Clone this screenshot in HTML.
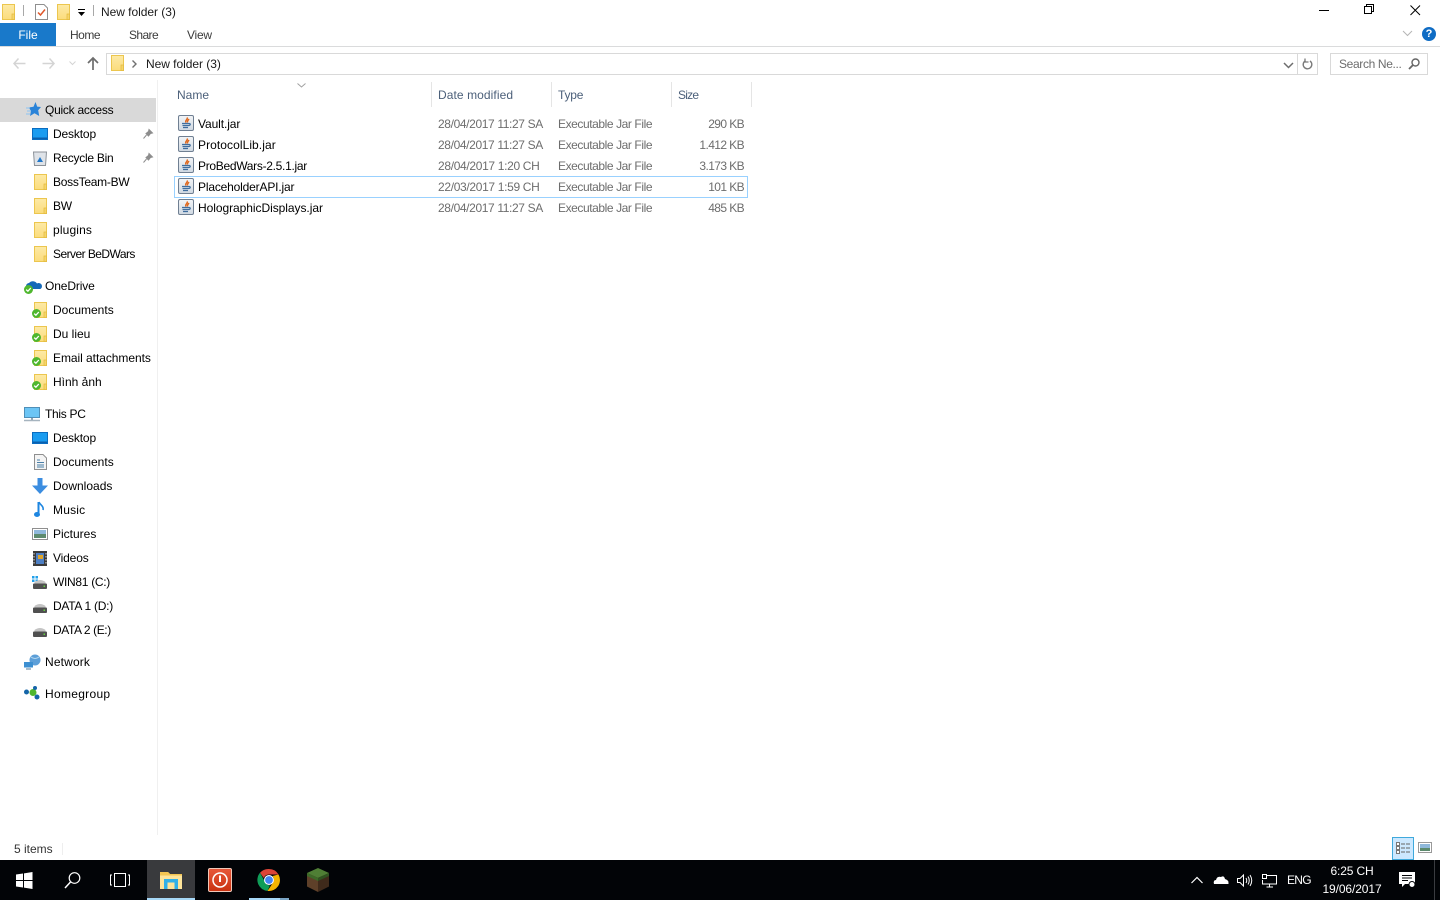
<!DOCTYPE html>
<html><head><meta charset="utf-8"><title>New folder (3)</title>
<style>
html,body{margin:0;padding:0;width:1440px;height:900px;overflow:hidden;background:#fff}
body{position:relative;font-family:"Liberation Sans","DejaVu Sans",sans-serif;font-size:12px;color:#000}
.t{position:absolute;white-space:nowrap;line-height:16px;height:16px}
.b{position:absolute}
svg{position:absolute;overflow:visible}
.g{color:#6d6d6d}.h{color:#4c607a}
.r{text-align:right}
.d{letter-spacing:-.37px}.d2{letter-spacing:-.33px}.e{letter-spacing:-.42px}.s{letter-spacing:-.6px}
</style></head><body>
<svg width="0" height="0" style="position:absolute">
<defs>
<linearGradient id="fg" x1="0" y1="0" x2="0" y2="1"><stop offset="0" stop-color="#fdeaa6"/><stop offset="1" stop-color="#fbdc7c"/></linearGradient>
<linearGradient id="jg" x1="0" y1="0" x2="0" y2="1"><stop offset="0" stop-color="#f3f5f7"/><stop offset="1" stop-color="#cfd8e2"/></linearGradient>
<linearGradient id="rg" x1="0" y1="0" x2="0" y2="1"><stop offset="0" stop-color="#e8583a"/><stop offset="1" stop-color="#c93210"/></linearGradient>
<symbol id="f" viewBox="0 0 13 16"><path d="M.5 .5H12.500V15.500H.5Z" fill="url(#fg)" stroke="#ecc64e"/><rect x="10" y="10" width="2.500" height="5.500" fill="#f6d56a" stroke="#e3b93f" stroke-width=".7"/></symbol>
<symbol id="ok" viewBox="0 0 9 9"><circle cx="4.500" cy="4.500" r="4.500" fill="#4fb72e"/><path d="M2.200 4.600L3.900 6.200 6.800 3" fill="none" stroke="#fff" stroke-width="1.300"/></symbol>
<symbol id="jar" viewBox="0 0 16 16"><rect x=".5" y=".5" width="15" height="15" rx="1.500" fill="url(#jg)" stroke="#6f7f92"/><path d="M9 2.500C10.500 4.500 6.500 5 8 7.500M11 4C10 5.500 9 6 9.500 7.500" fill="none" stroke="#e0661a" stroke-width="1.400"/><path d="M4 8.500H11M4.500 10.500H10.500M5 12.500H10M11 8.500c2 0 1.500 2-.5 2" fill="none" stroke="#3f6d9e" stroke-width="1.200"/></symbol>
<symbol id="desk" viewBox="0 0 16 12" preserveAspectRatio="none"><rect x=".5" y=".5" width="15" height="11" fill="#1a9cf0" stroke="#0a6cc0"/><path d="M1 9.500H15V11H1Z" fill="#0a5fae"/></symbol>
<symbol id="drive" viewBox="0 0 14 10" preserveAspectRatio="none"><path d="M1.500 3Q7 -1 12.500 3V5H1.500Z" fill="#c4c4c4"/><rect x="0" y="4.500" width="14" height="5.500" rx="1" fill="#505050"/><rect x="10.500" y="6.500" width="1.500" height="1.500" fill="#63d13e"/></symbol>
</defs></svg>

<!-- title bar -->
<svg style="left:2px;top:4px" width="13" height="16"><use href="#f" width="13" height="16"/></svg>
<div class="b" style="left:23px;top:5px;width:1px;height:11px;background:#a8a8a8"></div>
<svg style="left:35px;top:4px" width="13" height="16"><path d="M.5.5H9L12.500 4V15.500H.5Z" fill="#fff" stroke="#8f8f8f"/><path d="M3 8.500L5.500 11 10 5.500" fill="none" stroke="#e0572a" stroke-width="1.500"/></svg>
<svg style="left:57px;top:4px" width="13" height="16"><use href="#f" width="13" height="16"/></svg>
<svg style="left:77px;top:9px" width="9" height="8"><path d="M1 .5H8" stroke="#000"/><path d="M1 3H8L4.500 7Z" fill="#000"/></svg>
<div class="b" style="left:93px;top:5px;width:1px;height:11px;background:#a8a8a8"></div>
<div class="t" style="left:101px;top:4px;letter-spacing:-.04px;color:#1a1a1a">New folder (3)</div>
<svg style="left:1319px;top:5px" width="11" height="11"><path d="M0 5.500H10" stroke="#000"/></svg>
<svg style="left:1364px;top:4px" width="11" height="11"><path d="M.5 2.500H7.500V9.500H.5ZM2.500 2.500V.5H9.500V7.500H7.500" fill="none" stroke="#000"/></svg>
<svg style="left:1410px;top:5px" width="11" height="11"><path d="M.5 .5L10 10M10 .5L.5 10" stroke="#000" stroke-width="1"/></svg>

<!-- ribbon -->
<div class="b" style="left:0;top:23px;width:56px;height:23px;background:#1979ca"></div>
<div class="t" style="left:0;top:27px;width:56px;text-align:center;color:#fff">File</div>
<div class="t" style="left:70px;top:27px;color:#3b3b3b;letter-spacing:-.5px">Home</div>
<div class="t" style="left:129px;top:27px;color:#3b3b3b;letter-spacing:-.6px">Share</div>
<div class="t" style="left:187px;top:27px;color:#3b3b3b;letter-spacing:-.25px">View</div>
<div class="b" style="left:0;top:46px;width:1440px;height:1px;background:#dadbdc"></div>
<svg style="left:1402px;top:30px" width="11" height="7"><path d="M1 1L5.500 5.500 10 1" fill="none" stroke="#b5b5b5"/></svg>
<div class="b" style="left:1422px;top:27px;width:14px;height:14px;border-radius:50%;background:#0f6cc4;color:#fff;font:bold 11px/14px 'Liberation Sans',sans-serif;text-align:center">?</div>

<!-- nav bar -->
<svg style="left:13px;top:58px" width="13" height="11"><path d="M5.500 .5L1 5.500 5.500 10.500M1 5.500H12.500" fill="none" stroke="#d4d4d4" stroke-width="1.500"/></svg>
<svg style="left:42px;top:58px" width="13" height="11"><path d="M7.500 .5L12 5.500 7.500 10.500M12 5.500H.5" fill="none" stroke="#d4d4d4" stroke-width="1.500"/></svg>
<svg style="left:69px;top:61px" width="7" height="5"><path d="M.5 .5L3.500 3.500 6.500 .5" fill="none" stroke="#d4d4d4"/></svg>
<svg style="left:87px;top:57px" width="12" height="13"><path d="M1 6L6 1 11 6M6 1.500V13" fill="none" stroke="#6d6d6d" stroke-width="1.700"/></svg>
<div class="b" style="left:106px;top:53px;width:1210px;height:20px;border:1px solid #d9d9d9"></div>
<svg style="left:111px;top:55px" width="13" height="16"><use href="#f" width="13" height="16"/></svg>
<svg style="left:132px;top:60px" width="5" height="8"><path d="M.5 .5L4 4 .5 7.500" fill="none" stroke="#707070" stroke-width="1.400"/></svg>
<div class="t" style="left:146px;top:56px;letter-spacing:-.04px;color:#1a1a1a">New folder (3)</div>
<svg style="left:1283px;top:62px" width="11" height="7"><path d="M1 1L5.500 5.500 10 1" fill="none" stroke="#6d6d6d" stroke-width="1.500"/></svg>
<div class="b" style="left:1297px;top:53px;width:1px;height:21px;background:#d9d9d9"></div>
<svg style="left:1302px;top:58px" width="11" height="12"><path d="M3.500 2.700A4.300 4.300 0 1 0 8 3" fill="none" stroke="#7a7a7a" stroke-width="1.400"/><path d="M3 .5V4H6.500" fill="none" stroke="#7a7a7a" stroke-width="1.300"/></svg>
<div class="b" style="left:1330px;top:53px;width:96px;height:20px;border:1px solid #d9d9d9"></div>
<div class="t" style="left:1339px;top:56px;color:#6d6d6d;letter-spacing:-.35px">Search Ne...</div>
<svg style="left:1408px;top:58px" width="12" height="12"><circle cx="7.500" cy="4.500" r="3.500" fill="none" stroke="#666" stroke-width="1.400"/><path d="M5 7L1 11" stroke="#666" stroke-width="1.800"/></svg>

<!-- sidebar -->
<div class="b" style="left:0;top:98px;width:156px;height:24px;background:#d9d9d9"></div>
<div class="b" style="left:157px;top:80px;width:1px;height:755px;background:#f0f0f0"></div>

<svg style="left:26px;top:102px" width="15" height="15"><path d="M9.500 0L11.200 4.600 15 5 12.200 8.300 13.200 14 8.500 11.300 4 14 5 8.800 2.500 5.500 7.500 4.800Z" fill="#2a83d8"/><path d="M0 6H4M1 9H5M0 12H4" stroke="#8cc4f2"/></svg>
<div class="t" style="left:45px;top:102px;letter-spacing:-.25px">Quick access</div>

<svg style="left:32px;top:128px" width="16" height="12"><use href="#desk" width="16" height="12"/></svg>
<div class="t" style="left:53px;top:126px;letter-spacing:-.15px">Desktop</div>
<svg style="left:143px;top:129px" width="10" height="10"><path d="M6 .5L9.500 4 7.500 4.500 5.500 7 3 4.500 5.500 2.500ZM3.500 6L.5 9.500" fill="#8d8d8d" stroke="#8d8d8d"/></svg>

<svg style="left:33px;top:151px" width="14" height="15"><path d="M.5 1H13.500L12.500 14.500H1.500Z" fill="#dfe3e8" stroke="#8c9299"/><path d="M7 6L10 11H4Z" fill="#2378c9"/></svg>
<div class="t" style="left:53px;top:150px;letter-spacing:-.27px">Recycle Bin</div>
<svg style="left:143px;top:153px" width="10" height="10"><path d="M6 .5L9.500 4 7.500 4.500 5.500 7 3 4.500 5.500 2.500ZM3.500 6L.5 9.500" fill="#8d8d8d" stroke="#8d8d8d"/></svg>

<svg style="left:34px;top:174px" width="13" height="16"><use href="#f" width="13" height="16"/></svg>
<div class="t" style="left:53px;top:174px;letter-spacing:-.27px">BossTeam-BW</div>
<svg style="left:34px;top:198px" width="13" height="16"><use href="#f" width="13" height="16"/></svg>
<div class="t" style="left:53px;top:198px;letter-spacing:-.3px">BW</div>
<svg style="left:34px;top:222px" width="13" height="16"><use href="#f" width="13" height="16"/></svg>
<div class="t" style="left:53px;top:222px;letter-spacing:.15px">plugins</div>
<svg style="left:34px;top:246px" width="13" height="16"><use href="#f" width="13" height="16"/></svg>
<div class="t" style="left:53px;top:246px;letter-spacing:-.55px">Server BeDWars</div>

<svg style="left:24px;top:280px" width="17" height="14"><path d="M3 9A3.500 3.500 0 0 1 5 3 5 5 0 0 1 13 3.500 3.200 3.200 0 0 1 16.500 9H6Z" fill="#1569b9"/></svg>
<svg style="left:24px;top:285px" width="9" height="9"><use href="#ok" width="9" height="9"/></svg>
<div class="t" style="left:45px;top:278px;letter-spacing:-.12px">OneDrive</div>

<svg style="left:34px;top:302px" width="13" height="16"><use href="#f" width="13" height="16"/></svg>
<svg style="left:32px;top:309px" width="9" height="9"><use href="#ok" width="9" height="9"/></svg>
<div class="t" style="left:53px;top:302px">Documents</div>
<svg style="left:34px;top:326px" width="13" height="16"><use href="#f" width="13" height="16"/></svg>
<svg style="left:32px;top:333px" width="9" height="9"><use href="#ok" width="9" height="9"/></svg>
<div class="t" style="left:53px;top:326px">Du lieu</div>
<svg style="left:34px;top:350px" width="13" height="16"><use href="#f" width="13" height="16"/></svg>
<svg style="left:32px;top:357px" width="9" height="9"><use href="#ok" width="9" height="9"/></svg>
<div class="t" style="left:53px;top:350px;letter-spacing:-.05px">Email attachments</div>
<svg style="left:34px;top:374px" width="13" height="16"><use href="#f" width="13" height="16"/></svg>
<svg style="left:32px;top:381px" width="9" height="9"><use href="#ok" width="9" height="9"/></svg>
<div class="t" style="left:53px;top:374px">Hình ảnh</div>

<svg style="left:24px;top:407px" width="17" height="15"><rect x=".5" y=".5" width="15" height="10" fill="#6cc5f5" stroke="#4f8fb8"/><path d="M7 11H9V13H7Z" fill="#8fa4b4"/><path d="M0 13.500H16" stroke="#a6b4bf" stroke-width="1.500"/></svg>
<div class="t" style="left:45px;top:406px;letter-spacing:-.3px">This PC</div>
<svg style="left:32px;top:432px" width="16" height="12"><use href="#desk" width="16" height="12"/></svg>
<div class="t" style="left:53px;top:430px;letter-spacing:-.15px">Desktop</div>
<svg style="left:34px;top:454px" width="13" height="16"><path d="M.5.5H9L12.500 4V15.500H.5Z" fill="#f4f4f4" stroke="#8f8f8f"/><path d="M3 6H6M3 8.500H10M3 11H10M3 13H10" stroke="#4a7fa8"/></svg>
<div class="t" style="left:53px;top:454px">Documents</div>
<svg style="left:32px;top:478px" width="16" height="16"><path d="M5.500 0H10.500V7.500H16L8 16 0 7.500H5.500Z" fill="#3b8de0"/></svg>
<div class="t" style="left:53px;top:478px">Downloads</div>
<svg style="left:34px;top:501px" width="12" height="17"><path d="M4.500 1V13" stroke="#1e86e0" stroke-width="2"/><ellipse cx="3" cy="13.500" rx="3" ry="2.500" fill="#1e86e0"/><path d="M5 1C6 4 10 5 9 9" fill="none" stroke="#1e86e0" stroke-width="1.600"/></svg>
<div class="t" style="left:53px;top:502px;letter-spacing:.2px">Music</div>
<svg style="left:32px;top:528px" width="16" height="12"><rect x=".5" y=".5" width="15" height="11" fill="#fff" stroke="#8f8f8f"/><rect x="2" y="2" width="12" height="4" fill="#8fb8da"/><rect x="2" y="6" width="12" height="4" fill="#5c8a6d"/></svg>
<div class="t" style="left:53px;top:526px">Pictures</div>
<svg style="left:33px;top:551px" width="14" height="15"><rect width="14" height="15" fill="#3a3a3a"/><rect x="3" y="2" width="8" height="11" fill="#4d7fc4"/><rect x="5" y="4" width="5" height="4" fill="#e0a52a"/><path d="M1 2V13M13 2V13" stroke="#ddd" stroke-dasharray="1.500 1.500"/></svg>
<div class="t" style="left:53px;top:550px;letter-spacing:-.15px">Videos</div>
<svg style="left:32px;top:576px" width="6" height="6"><path d="M0 0H2.500V2.500H0ZM3.500 0H6V2.500H3.500ZM0 3.500H2.500V6H0ZM3.500 3.500H6V6H3.500Z" fill="#22a0ea"/></svg>
<svg style="left:33px;top:579px" width="14" height="10"><use href="#drive" width="14" height="10"/></svg>
<div class="t" style="left:53px;top:574px;letter-spacing:-.3px">WIN81 (C:)</div>
<svg style="left:33px;top:603px" width="14" height="10"><use href="#drive" width="14" height="10"/></svg>
<div class="t" style="left:53px;top:598px;letter-spacing:-.27px">DATA 1 (D:)</div>
<svg style="left:33px;top:627px" width="14" height="10"><use href="#drive" width="14" height="10"/></svg>
<div class="t" style="left:53px;top:622px;letter-spacing:-.4px">DATA 2 (E:)</div>

<svg style="left:24px;top:654px" width="17" height="16"><circle cx="11" cy="6" r="5.500" fill="#5d9fd8"/><path d="M7 3Q11 6 15 3" stroke="#b5d8f0" fill="none"/><rect x="0" y="8" width="9" height="5.500" fill="#3d8fd1"/><path d="M2 15H7" stroke="#8ba4b8" stroke-width="1.500"/></svg>
<div class="t" style="left:45px;top:654px;letter-spacing:.15px">Network</div>
<svg style="left:24px;top:686px" width="16" height="14"><circle cx="2.500" cy="6" r="2.500" fill="#1565a8"/><circle cx="9" cy="6.500" r="3.500" fill="#4fb72e"/><circle cx="11" cy="2" r="2" fill="#1565a8"/><circle cx="13" cy="11" r="2.500" fill="#1565a8"/></svg>
<div class="t" style="left:45px;top:686px;letter-spacing:.3px">Homegroup</div>

<!-- column headers -->
<svg style="left:297px;top:83px" width="9" height="5"><path d="M.5 .5L4.500 4 8.500 .5" fill="none" stroke="#a0a0a0"/></svg>
<div class="t h" style="left:177px;top:87px">Name</div>
<div class="b" style="left:431px;top:82px;width:1px;height:25px;background:#e5e5e5"></div>
<div class="t h" style="left:438px;top:87px;letter-spacing:.08px">Date modified</div>
<div class="b" style="left:551px;top:82px;width:1px;height:25px;background:#e5e5e5"></div>
<div class="t h" style="left:558px;top:87px;letter-spacing:-.2px">Type</div>
<div class="b" style="left:671px;top:82px;width:1px;height:25px;background:#e5e5e5"></div>
<div class="t h" style="left:678px;top:87px;letter-spacing:-.75px">Size</div>
<div class="b" style="left:751px;top:82px;width:1px;height:25px;background:#e5e5e5"></div>

<!-- files -->
<div class="b" style="left:174px;top:176px;width:572px;height:20px;border:1px solid #99d1ff"></div>

<svg style="left:178px;top:115px" width="16" height="16"><use href="#jar" width="16" height="16"/></svg>
<div class="t" style="left:198px;top:116px;letter-spacing:-.1px">Vault.jar</div>
<div class="t g d" style="left:438px;top:116px">28/04/2017 11:27 SA</div>
<div class="t g e" style="left:558px;top:116px">Executable Jar File</div>
<div class="t g r s" style="left:674px;top:116px;width:70px">290 KB</div>

<svg style="left:178px;top:136px" width="16" height="16"><use href="#jar" width="16" height="16"/></svg>
<div class="t" style="left:198px;top:137px;letter-spacing:.07px">ProtocolLib.jar</div>
<div class="t g d" style="left:438px;top:137px">28/04/2017 11:27 SA</div>
<div class="t g e" style="left:558px;top:137px">Executable Jar File</div>
<div class="t g r s" style="left:674px;top:137px;width:70px">1.412 KB</div>

<svg style="left:178px;top:157px" width="16" height="16"><use href="#jar" width="16" height="16"/></svg>
<div class="t" style="left:198px;top:158px;letter-spacing:-.3px">ProBedWars-2.5.1.jar</div>
<div class="t g d2" style="left:438px;top:158px">28/04/2017 1:20 CH</div>
<div class="t g e" style="left:558px;top:158px">Executable Jar File</div>
<div class="t g r s" style="left:674px;top:158px;width:70px">3.173 KB</div>

<svg style="left:178px;top:178px" width="16" height="16"><use href="#jar" width="16" height="16"/></svg>
<div class="t" style="left:198px;top:179px;letter-spacing:-.17px">PlaceholderAPI.jar</div>
<div class="t g d2" style="left:438px;top:179px">22/03/2017 1:59 CH</div>
<div class="t g e" style="left:558px;top:179px">Executable Jar File</div>
<div class="t g r s" style="left:674px;top:179px;width:70px">101 KB</div>

<svg style="left:178px;top:199px" width="16" height="16"><use href="#jar" width="16" height="16"/></svg>
<div class="t" style="left:198px;top:200px;letter-spacing:-.05px">HolographicDisplays.jar</div>
<div class="t g d" style="left:438px;top:200px">28/04/2017 11:27 SA</div>
<div class="t g e" style="left:558px;top:200px">Executable Jar File</div>
<div class="t g r s" style="left:674px;top:200px;width:70px">485 KB</div>

<!-- status bar -->
<div class="t" style="left:14px;top:841px;color:#333">5 items</div>
<div class="b" style="left:62px;top:843px;width:1px;height:12px;background:#eee"></div>
<div class="b" style="left:1392px;top:837px;width:20px;height:21px;background:#cce8ff;border:1px solid #3fa9dc"></div>
<svg style="left:1396px;top:842px" width="16" height="13"><path d="M.5.5H3.500V3.500H.5ZM.5 4.500H3.500V7.500H.5Z" fill="#fff" stroke="#777"/><path d="M.5 8.500H3.500V11.500H.5Z" fill="#fff" stroke="#777"/><path d="M5 2H9M10 2H14M5 6H9M10 6H14M5 10H9M10 10H14" stroke="#666"/></svg>
<svg style="left:1418px;top:842px" width="14" height="11"><rect x=".5" y=".5" width="13" height="10" fill="#fff" stroke="#999"/><rect x="2" y="2" width="10" height="4" fill="#8fb8da"/><rect x="2" y="6" width="10" height="3" fill="#5c8a6d"/></svg>

<!-- taskbar -->
<div class="b" style="left:0;top:860px;width:1440px;height:40px;background:#020407"></div>
<svg style="left:16px;top:872px" width="17" height="17"><path d="M0 2.500L7 1.500V8H0ZM8 1.400L16.500 0V8H8ZM0 9H7V15.500L0 14.500ZM8 9H16.500V17L8 15.600Z" fill="#fff"/></svg>
<svg style="left:64px;top:872px" width="17" height="17"><circle cx="10.500" cy="6" r="5.300" fill="none" stroke="#fff" stroke-width="1.200"/><path d="M6.500 10L1 16" stroke="#fff" stroke-width="1.500"/></svg>
<svg style="left:110px;top:873px" width="20" height="14"><rect x="4.500" y=".5" width="11" height="13" fill="none" stroke="#fff"/><path d="M2 2H.5V12H2M18 2H19.500V12H18" fill="none" stroke="#fff"/></svg>
<div class="b" style="left:147px;top:860px;width:48px;height:38px;background:#393a3d"></div>
<div class="b" style="left:147px;top:898px;width:48px;height:2px;background:#a6d8f7"></div>
<svg style="left:160px;top:871px" width="22" height="18"><path d="M0 1H8L10 3H22V18H0Z" fill="#fde49a"/><path d="M0 1H8L10 3H22V4.500H0Z" fill="#f3c552"/><path d="M4 18V8H18V18H14.500V11.500H7.500V18Z" fill="#2fb0e8"/></svg>
<svg style="left:208px;top:868px" width="24" height="24"><rect x=".5" y=".5" width="23" height="23" rx="1.500" fill="url(#rg)" stroke="#f0c8b8"/><circle cx="12" cy="12" r="7" fill="none" stroke="#fff" stroke-width="1.500"/><path d="M12 7.500V14" stroke="#fff" stroke-width="2"/></svg>
<svg style="left:258px;top:869px" width="22" height="22" viewBox="0 0 22 22"><path d="M11 0A11 11 0 0 1 20.500 5.500H11A5.500 5.500 0 0 0 5.800 9L2 3.800A11 11 0 0 1 11 0Z" fill="#db4437"/><path d="M2 3.800L6.500 12A5.500 5.500 0 0 0 12 16.400L9.500 21.900A11 11 0 0 1 2 3.800Z" fill="#0f9d58"/><path d="M20.500 5.500A11 11 0 0 1 9.500 21.900L14.800 14A5.500 5.500 0 0 0 14.500 7Z" fill="#f4b400"/><circle cx="11" cy="11" r="5" fill="#fff"/><circle cx="11" cy="11" r="3.900" fill="#4285f4"/></svg>
<div class="b" style="left:249px;top:898px;width:31px;height:2px;background:#a6d8f7"></div>
<div class="b" style="left:280px;top:898px;width:9px;height:2px;background:#7aa5c5"></div>
<svg style="left:306px;top:868px" width="24" height="24"><path d="M12 0L23 5 12 10 1 5Z" fill="#4f7f35"/><path d="M1 5L12 10V24L1 18.500Z" fill="#5e4029"/><path d="M23 5L12 10V24L23 18.500Z" fill="#3f2a1b"/><path d="M1 5L12 10V13L1 8Z" fill="#3d6a28"/><path d="M23 5L12 10V13L23 8Z" fill="#2f5320"/></svg>

<!-- tray -->
<svg style="left:1191px;top:876px" width="12" height="8"><path d="M.5 7L6 1.500 11.500 7" fill="none" stroke="#fff" stroke-width="1.200"/></svg>
<svg style="left:1213px;top:874px" width="16" height="11"><path d="M1 10Q0 6 3 6 4 2 8 3 11 1 12 5 16 6 15.500 10Z" fill="#fff"/></svg>
<svg style="left:1237px;top:874px" width="16" height="13"><path d="M.5 4.500H3L6.500 1V12L3 8.500H.5Z" fill="none" stroke="#fff"/><path d="M9 4Q10.500 6.500 9 9M11 2.500Q13.500 6.500 11 10.500M13 1Q16.500 6.500 13 12" fill="none" stroke="#fff"/></svg>
<svg style="left:1261px;top:873px" width="17" height="15"><path d="M4 2.500H15.500V11H1.500V7" fill="none" stroke="#fff"/><rect x="1.500" y="1.500" width="4" height="4" fill="#020407" stroke="#fff"/><path d="M8.500 11V14M5.500 14H12" stroke="#fff"/></svg>
<div class="t" style="left:1287px;top:872px;color:#fff;letter-spacing:-.7px">ENG</div>
<div class="t" style="left:1300px;top:863px;width:104px;text-align:center;color:#fff;letter-spacing:-.15px">6:25 CH</div>
<div class="t" style="left:1300px;top:881px;width:104px;text-align:center;color:#fff;letter-spacing:-.1px">19/06/2017</div>
<svg style="left:1399px;top:872px" width="17" height="16"><path d="M0 0H16V12H6L3 15V12H0Z" fill="#fff"/><path d="M3 3.500H13M3 6H13M3 8.500H9" stroke="#020407"/><circle cx="13" cy="12.500" r="3" fill="#fff" stroke="#020407"/></svg>
<div class="b" style="left:1434px;top:860px;width:1px;height:40px;background:#3a3c40"></div>
</body></html>
